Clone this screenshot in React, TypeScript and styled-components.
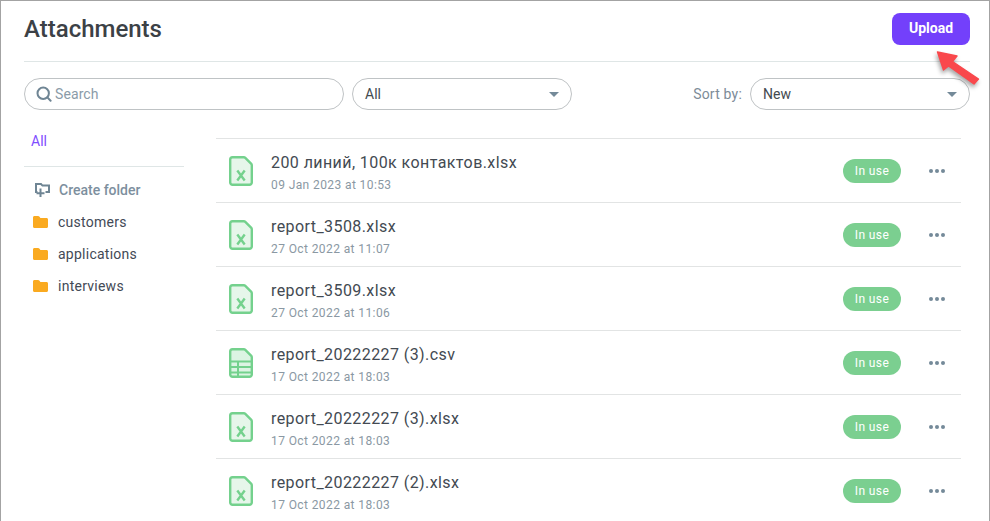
import React from "react";
import styled, { createGlobalStyle } from "styled-components";

const Global = createGlobalStyle`
  html, body { margin: 0; padding: 0; background: #fff; }
  body { font-family: Roboto, "Noto Sans", sans-serif; }
`;

const Page = styled.div`
  position: relative;
  box-sizing: border-box;
  width: 990px;
  height: 521px;
  overflow: hidden;
  border: 1px solid #a3a3a3;
  border-bottom: 0;
  padding: 0 19px 0 23px;
  background: #fff;
`;

const Header = styled.header`
  display: flex;
  justify-content: space-between;
  align-items: flex-start;
  box-sizing: border-box;
  height: 61px;
  padding-top: 12px;
  border-bottom: 1px solid #dfe6e6;
`;

const Title = styled.h1`
  margin: 0;
  font-size: 24px;
  line-height: 32px;
  font-weight: 500;
  color: #3c4146;
`;

const UploadButton = styled.button`
  width: 78px;
  height: 32px;
  padding: 0 0 2px;
  border: 0;
  border-radius: 8px;
  background: #7340fb;
  color: #fff;
  font: 700 14px Roboto, sans-serif;
`;

const Filters = styled.div`
  display: flex;
  align-items: center;
  height: 32px;
  margin-top: 16px;
`;

const SearchBox = styled.div`
  box-sizing: border-box;
  display: flex;
  align-items: center;
  gap: 3px;
  width: 320px;
  height: 32px;
  padding-left: 11px;
  border: 1px solid #bfc3c5;
  border-radius: 16px;
  font-size: 14px;
  letter-spacing: 0.1px;
  color: #8a9ba8;
`;

const SelectBox = styled.div<{ $width: number }>`
  box-sizing: border-box;
  display: flex;
  align-items: center;
  justify-content: space-between;
  width: ${(p) => p.$width}px;
  height: 32px;
  padding: 0 12px;
  border: 1px solid #bfc3c5;
  border-radius: 16px;
  font-size: 14px;
  color: #434a50;
`;

const AllSelect = styled(SelectBox)`
  margin-left: 8px;
`;

const Caret = styled.span`
  width: 0;
  height: 0;
  border-left: 5px solid transparent;
  border-right: 5px solid transparent;
  border-top: 5px solid #748a99;
`;

const SortLabel = styled.span`
  margin-left: auto;
  margin-right: 8px;
  font-size: 14px;
  letter-spacing: 0.2px;
  color: #7d8c98;
`;

const Body = styled.div`
  display: flex;
  margin-top: 20px;
`;

const Sidebar = styled.aside`
  width: 160px;
  flex: none;
`;

const AllLink = styled.div`
  height: 36px;
  padding-left: 7px;
  font-size: 14px;
  line-height: 22px;
  color: #7f4dff;
  border-bottom: 1px solid #dfe6e6;
`;

const FolderList = styled.ul`
  list-style: none;
  margin: 7px 0 0;
  padding: 0;
`;

const FolderRow = styled.li`
  display: flex;
  align-items: center;
  gap: 10px;
  height: 32px;
  padding-left: 9px;
  font-size: 14px;
  letter-spacing: 0.25px;
  color: #434a56;
`;

const CreateRow = styled(FolderRow)`
  font-weight: 500;
  letter-spacing: 0;
  color: #7d8f9e;
  gap: 9px;
  padding-left: 11px;
`;

const FileList = styled.ul`
  list-style: none;
  margin: 8px 0 0 32px;
  padding: 0;
  width: 745px;
  border-top: 1px solid #e2e4e4;
`;

const FileRow = styled.li`
  display: flex;
  align-items: center;
  box-sizing: border-box;
  height: 64px;
  padding: 0 13px;
  border-bottom: 1px solid #e2e4e4;
`;

const FileMeta = styled.div`
  flex: 1;
  margin-left: 18px;
  padding-top: 5px;
`;

const FileName = styled.div`
  font-size: 16px;
  line-height: 20px;
  letter-spacing: 0.42px;
  color: #434a52;
`;

const FileDate = styled.div`
  margin-top: 4px;
  font-size: 12px;
  line-height: 16px;
  letter-spacing: 0.4px;
  color: #8a98a3;
`;

const Badge = styled.span`
  box-sizing: border-box;
  width: 58px;
  height: 24px;
  border-radius: 12px;
  background: #7bcf90;
  color: #fff;
  font-size: 12px;
  font-weight: 400;
  letter-spacing: 0.4px;
  line-height: 24px;
  text-align: center;
`;

const Dots = styled.div`
  display: flex;
  gap: 2px;
  margin-left: 28px;
  margin-right: 3px;
`;

const Dot = styled.i`
  width: 4px;
  height: 4px;
  border-radius: 50%;
  background: #748a99;
`;

const ArrowOverlay = styled.svg`
  position: absolute;
  left: 930px;
  top: 44px;
  overflow: visible;
  filter: drop-shadow(-1px 3px 2px rgba(0, 0, 0, 0.35));
`;

const SearchIcon = () => (
  <svg width="16" height="16" viewBox="0 0 16 16" fill="none" stroke="#6f8594" strokeWidth="2">
    <circle cx="7.2" cy="7.2" r="5.7" />
    <path d="M11.4 11.4 14.6 14.8" strokeLinecap="round" />
  </svg>
);

const FolderIcon = () => (
  <svg width="15" height="12" viewBox="0 0 15 12">
    <path d="M0 1.5C0 .6.6 0 1.5 0h3.600c.5 0 .9.2 1.200.6L7.400 2h6.100c.9 0 1.500.6 1.500 1.500v7c0 .9-.6 1.500-1.500 1.500h-12C.6 12 0 11.400 0 10.500z" fill="#faaa20" />
  </svg>
);

const CreateFolderIcon = () => (
  <svg width="15" height="14" viewBox="0 0 15 14" fill="none" stroke="#6f8594" strokeWidth="2">
    <path d="M2.500 9H1V1h5l1.500 1.600H14V9h-3.500" />
    <path d="M5.500 5.500V14M1.500 10.200h8" />
  </svg>
);

const XlsxIcon = () => (
  <svg width="24" height="30" viewBox="0 0 24 30" fill="none">
    <path d="M3.500 1.200h11.300c.6 0 1.100.2 1.500.6l6 6c.4.4.5 1 .5 1.600V26.500a2.300 2.300 0 0 1-2.300 2.300h-17a2.300 2.300 0 0 1-2.300-2.300v-23a2.300 2.300 0 0 1 2.300-2.300z" fill="#e6f6ea" stroke="#74d18d" strokeWidth="2.400" />
    <path d="M8.300 14.500 15.700 24.500M15.700 14.500 8.300 24.500" stroke="#74d18d" strokeWidth="2.400" />
  </svg>
);

const CsvIcon = () => (
  <svg width="24" height="30" viewBox="0 0 24 30" fill="none">
    <path d="M3.500 1.200h11.300c.6 0 1.100.2 1.500.6l6 6c.4.4.5 1 .5 1.600V26.500a2.300 2.300 0 0 1-2.300 2.300h-17a2.300 2.300 0 0 1-2.300-2.300v-23a2.300 2.300 0 0 1 2.300-2.300z" fill="#dcf4e3" stroke="#74d18d" strokeWidth="2.400" />
    <path d="M1 13.500h22M1 19h22M1 24.500h22M9 13.500V29" stroke="#74d18d" strokeWidth="2" />
  </svg>
);

const files = [
  { name: "200 линий, 100к контактов.xlsx", date: "09 Jan 2023 at 10:53", csv: false },
  { name: "report_3508.xlsx", date: "27 Oct 2022 at 11:07", csv: false },
  { name: "report_3509.xlsx", date: "27 Oct 2022 at 11:06", csv: false },
  { name: "report_20222227 (3).csv", date: "17 Oct 2022 at 18:03", csv: true },
  { name: "report_20222227 (3).xlsx", date: "17 Oct 2022 at 18:03", csv: false },
  { name: "report_20222227 (2).xlsx", date: "17 Oct 2022 at 18:03", csv: false },
];

const folders = ["customers", "applications", "interviews"];

export default function App() {
  return (
    <Page>
      <Global />
      <Header>
        <Title>Attachments</Title>
        <UploadButton>Upload</UploadButton>
      </Header>
      <Filters>
        <SearchBox>
          <SearchIcon />
          Search
        </SearchBox>
        <AllSelect $width={220}>
          All
          <Caret />
        </AllSelect>
        <SortLabel>Sort by:</SortLabel>
        <SelectBox $width={220}>
          New
          <Caret />
        </SelectBox>
      </Filters>
      <Body>
        <Sidebar>
          <AllLink>All</AllLink>
          <FolderList>
            <CreateRow>
              <CreateFolderIcon />
              Create folder
            </CreateRow>
            {folders.map((f) => (
              <FolderRow key={f}>
                <FolderIcon />
                {f}
              </FolderRow>
            ))}
          </FolderList>
        </Sidebar>
        <FileList>
          {files.map((f) => (
            <FileRow key={f.name}>
              {f.csv ? <CsvIcon /> : <XlsxIcon />}
              <FileMeta>
                <FileName>{f.name}</FileName>
                <FileDate>{f.date}</FileDate>
              </FileMeta>
              <Badge>In use</Badge>
              <Dots>
                <Dot />
                <Dot />
                <Dot />
              </Dots>
            </FileRow>
          ))}
        </FileList>
      </Body>
      <ArrowOverlay width="50" height="42" viewBox="0 0 50 42">
        <path d="M6.500 7 26 11 21.500 16.500 47.500 34 43 39 17.500 21 12.500 25Z" fill="#f9484c" stroke="#f9484c" strokeWidth="1.400" strokeLinejoin="round" />
      </ArrowOverlay>
    </Page>
  );
}
